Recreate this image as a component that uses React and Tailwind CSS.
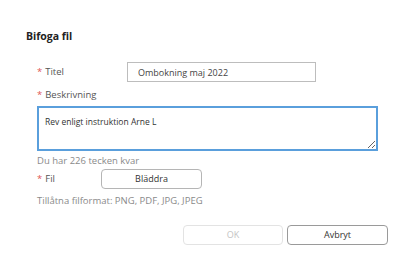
import React, { useState } from "react";

const AttachFile = () => {
  const [title, setTitle] = useState("Ombokning maj 2022");
  const [desc, setDesc] = useState("Rev enligt instruktion Arne L");

  return (
    <div className="w-[399px] h-[271px] bg-white font-['Open_Sans',sans-serif] text-[#333]">
      <div className="pl-[26px] pt-[28px]">
        <h1 className="text-[10.5px] font-bold leading-[16px] text-[#222]">Bifoga fil</h1>

        <div className="pl-[11px] pr-[21px] mt-[18px]">
          {/* Titel */}
          <div className="flex items-center h-[20px]">
            <label className="w-[90px] text-[9.5px] text-[#555]">
              <span className="text-[#e05555] mr-[3px]">*</span>Titel
            </label>
            <input
              type="text"
              value={title}
              onChange={(e) => setTitle(e.target.value)}
              className="w-[189px] h-[20px] border border-[#bdbdbd] px-[10px] text-[9px] text-[#444] outline-none"
            />
          </div>

          {/* Beskrivning */}
          <label className="block mt-[6px] h-[13px] leading-[13px] text-[9.5px] text-[#555]">
            <span className="text-[#e05555] mr-[3px]">*</span>Beskrivning
          </label>
          <textarea
            value={desc}
            onChange={(e) => setDesc(e.target.value)}
            className="block mt-[5px] w-[341px] h-[45px] border-2 border-[#5a9fdc] px-[6px] py-[7px] text-[8.5px] leading-[13px] text-[#333] outline-none"
          />
          <p className="mt-[3px] text-[9.5px] leading-[13px] text-[#8a8a8a]">Du har 226 tecken kvar</p>

          {/* Fil */}
          <div className="flex items-center h-[20px] mt-[2px]">
            <label className="w-[64px] text-[9.5px] text-[#555]">
              <span className="text-[#e05555] mr-[3px]">*</span>Fil
            </label>
            <button className="w-[101px] h-[20px] border border-[#b5b5b5] rounded-[4px] text-[9px] text-[#333]">
              Bläddra
            </button>
          </div>
          <p className="mt-[5px] text-[9.5px] leading-[13px] text-[#8a8a8a]">
            Tillåtna filformat: PNG, PDF, JPG, JPEG
          </p>
        </div>

        <div className="flex justify-end gap-[4px] pr-[11px] mt-[18px]">
          <button
            disabled
            className="w-[100px] h-[20px] border border-[#e3e3e3] rounded-[4px] text-[9px] text-[#c4c4c4]"
          >
            OK
          </button>
          <button className="w-[101px] h-[20px] border border-[#9a9a9a] rounded-[4px] text-[9px] text-[#333]">
            Avbryt
          </button>
        </div>
      </div>
    </div>
  );
};

export default function App() {
  return <AttachFile />;
}
